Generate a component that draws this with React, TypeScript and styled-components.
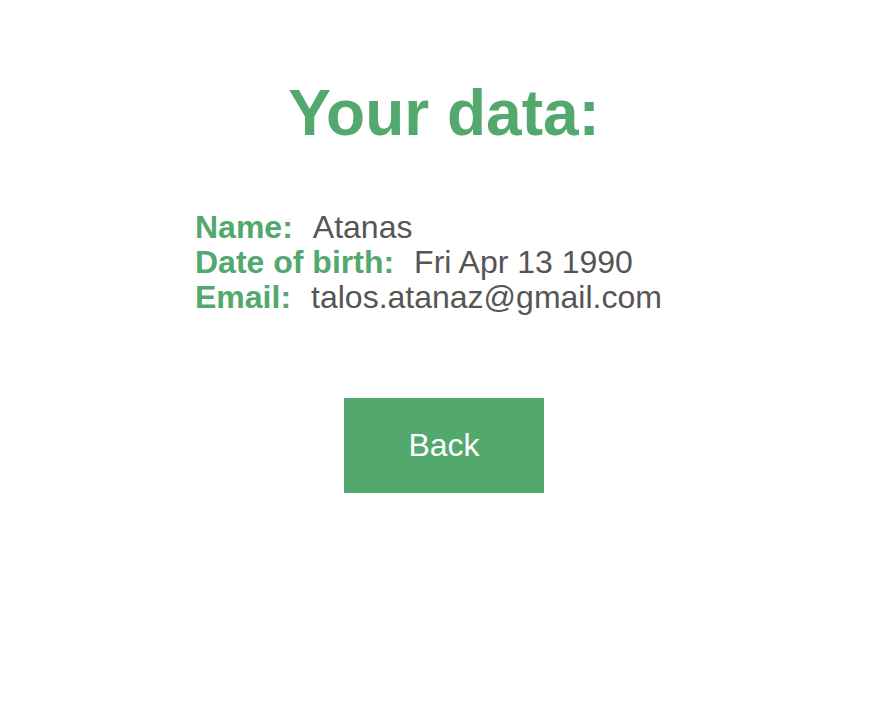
import React from "react";
import styled, { createGlobalStyle } from "styled-components";

const Global = createGlobalStyle`
  body { margin: 0; background: #fff; font-family: "Liberation Sans", Arial, sans-serif; }
`;

const Page = styled.div`
  display: flex;
  flex-direction: column;
  align-items: center;
  padding-top: 75px;
  padding-left: 12px;
`;

const Title = styled.h1`
  margin: 0;
  font-size: 64px;
  font-weight: 700;
  color: #53a86d;
  line-height: 76px;
`;

const Info = styled.div`
  align-self: flex-start;
  margin-left: 183px;
  margin-top: 59px;
  display: flex;
  flex-direction: column;
`;

const Row = styled.div`
  display: flex;
  gap: 20px;
  font-size: 32px;
  line-height: 35px;
`;

const Label = styled.span`
  font-weight: 700;
  color: #53a86d;
`;

const Value = styled.span`
  color: #555;
`;

const Button = styled.button`
  margin-top: 83px;
  width: 200px;
  height: 95px;
  border: none;
  background: #53a86d;
  color: #fff;
  font-family: "Liberation Sans", Arial, sans-serif;
  font-size: 32px;
  cursor: pointer;
`;

export default function App() {
  return (
    <>
      <Global />
      <Page>
        <Title>Your data:</Title>
        <Info>
          <Row><Label>Name:</Label><Value>Atanas</Value></Row>
          <Row><Label>Date of birth:</Label><Value>Fri Apr 13 1990</Value></Row>
          <Row><Label>Email:</Label><Value>talos.atanaz@gmail.com</Value></Row>
        </Info>
        <Button>Back</Button>
      </Page>
    </>
  );
}
